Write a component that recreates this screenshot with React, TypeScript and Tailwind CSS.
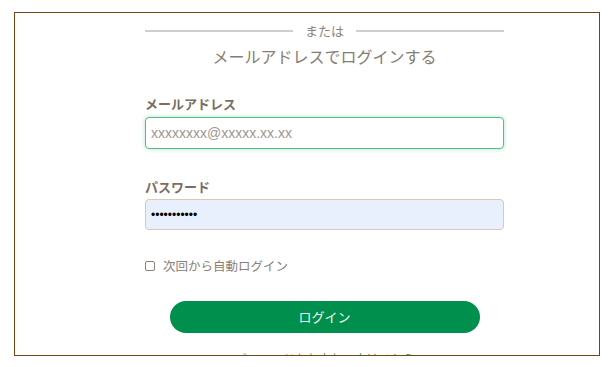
import React from "react";

const font = { fontFamily: '"Noto Sans CJK JP", "Noto Sans", sans-serif' };

export default function App() {
  return (
    <div className="min-h-screen bg-white pl-[14px] pt-[12px]" style={font}>
      <div className="h-[344px] w-[586px] overflow-hidden border border-[#774610] bg-white">
        <div className="ml-[130px] flex w-[359px] flex-col pt-[8px]">
          <div className="flex h-[20px] items-center gap-[12px]">
            <div className="h-[1.5px] flex-1 bg-[#cfcfcf]" />
            <span className="text-[13px] leading-[20px] text-[#8a8580]">または</span>
            <div className="h-[1.5px] flex-1 bg-[#cfcfcf]" />
          </div>
          <h1 className="mt-[3px] text-center text-[16px] leading-[24px] text-[#857d75]">
            メールアドレスでログインする
          </h1>

          <label className="mt-[26px] text-[13px] font-bold leading-[20px] text-[#7a6e63]">
            メールアドレス
          </label>
          <input
            type="text"
            placeholder="xxxxxxxx@xxxxx.xx.xx"
            className="mt-[3px] h-[32px] w-full rounded-[4px] border-[1.5px] border-[#55bd84] bg-white px-[5px] text-[14px] text-[#555] shadow-[0_0_4px_rgba(85,189,132,0.45)] outline-none placeholder:text-[#a0978f]"
            style={{ fontFamily: '"Liberation Sans", Arial, sans-serif' }}
          />

          <label className="mt-[28px] text-[13px] font-bold leading-[20px] text-[#7a6e63]">
            パスワード
          </label>
          <input
            type="password"
            defaultValue="passwordabc"
            className="mt-[2px] h-[31px] w-full rounded-[4px] border border-[#dac9b2] bg-[#e8f0fe] px-[5px] text-[12px] text-black outline-none"
            style={{ fontFamily: '"Liberation Sans", Arial, sans-serif' }}
          />

          <label className="mt-[26px] flex h-[20px] items-center gap-[8px] text-[12.5px] text-[#8a8078]">
            <span className="h-[10px] w-[10px] rounded-[2px] border-[1.5px] border-[#8a8078] bg-white" />
            次回から自動ログイン
          </label>

          <button
            type="button"
            className="mx-auto mt-[25px] h-[32px] w-[310px] rounded-full bg-[#008f4c] text-[13px] text-[#eef6f0]"
          >
            ログイン
          </button>

          <a className="mt-[16px] text-center text-[12px] leading-[20px] text-[#2e9d5e]">
            パスワードをお忘れの方はこちら
          </a>
        </div>
      </div>
    </div>
  );
}
